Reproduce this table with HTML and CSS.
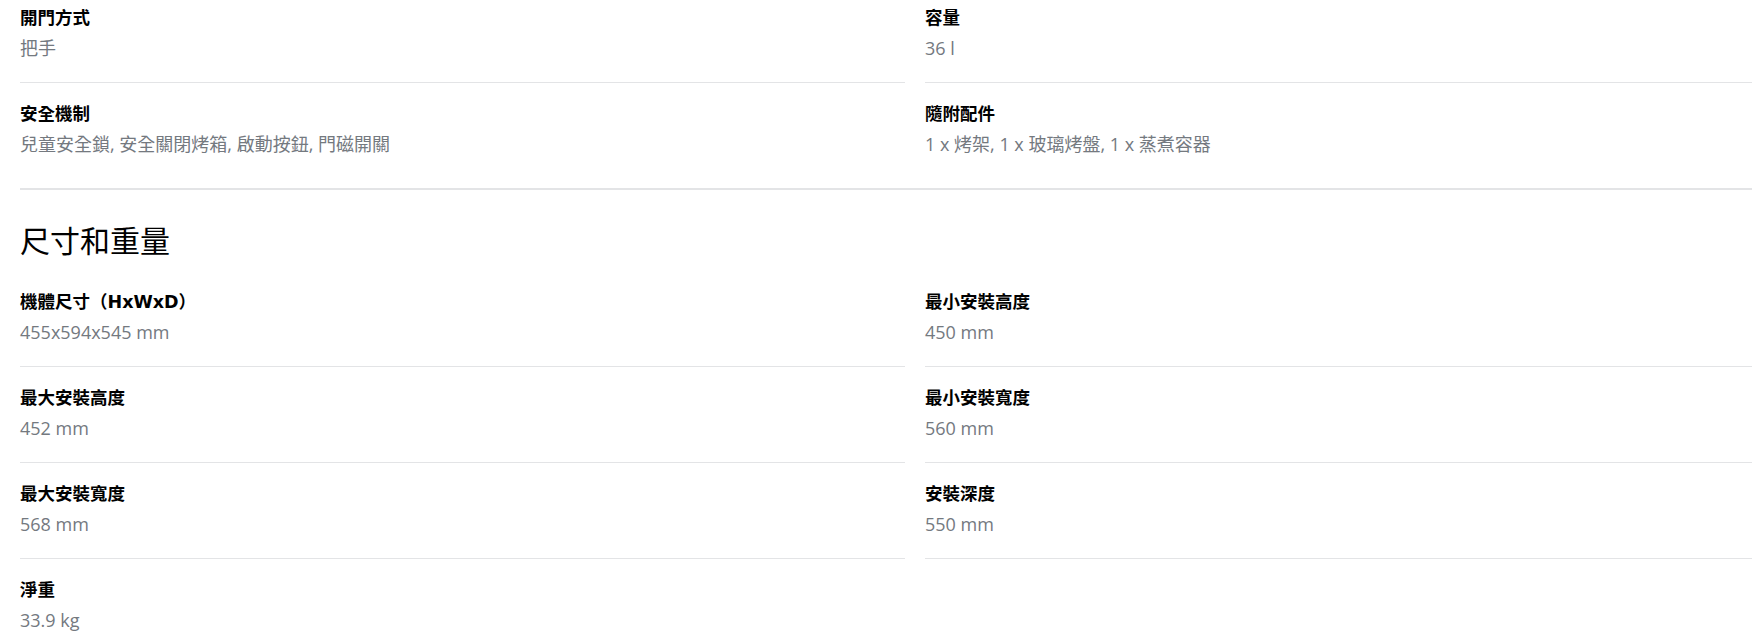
FILE: index.html
```html
<!DOCTYPE html>
<html lang="zh-Hant">
<head>
<meta charset="utf-8">
<link rel="stylesheet" href="styles.css">
</head>
<body>
<div class="page">
  <section class="section section--first">
    <div class="grid">
      <div class="item"><div class="label">開門方式</div><div class="value">把手</div></div>
      <div class="item"><div class="label">容量</div><div class="value">36 l</div></div>
      <div class="item item--last"><div class="label">安全機制</div><div class="value">兒童安全鎖, 安全關閉烤箱, 啟動按鈕, 門磁開關</div></div>
      <div class="item item--last"><div class="label">隨附配件</div><div class="value">1 x 烤架, 1 x 玻璃烤盤, 1 x 蒸煮容器</div></div>
    </div>
  </section>
  <section class="section">
    <h2 class="heading">尺寸和重量</h2>
    <div class="grid">
      <div class="item"><div class="label">機體尺寸（HxWxD）</div><div class="value">455x594x545 mm</div></div>
      <div class="item"><div class="label">最小安裝高度</div><div class="value">450 mm</div></div>
      <div class="item"><div class="label">最大安裝高度</div><div class="value">452 mm</div></div>
      <div class="item"><div class="label">最小安裝寬度</div><div class="value">560 mm</div></div>
      <div class="item"><div class="label">最大安裝寬度</div><div class="value">568 mm</div></div>
      <div class="item"><div class="label">安裝深度</div><div class="value">550 mm</div></div>
      <div class="item item--last"><div class="label">淨重</div><div class="value">33.9 kg</div></div>
    </div>
  </section>
</div>
</body>
</html>
```
FILE: styles.css
```css
html, body {
  margin: 0;
  padding: 0;
  background: #ffffff;
  overflow: hidden;
}

.page {
  margin-top: -13px;
  padding-left: 20px;
}

.section--first {
  padding-bottom: 10px;
  border-bottom: 2px solid #e3e4e6;
}

.heading {
  margin: 31px 0 14px;
  font-family: "Noto Sans CJK TC", "Liberation Sans", sans-serif;
  font-size: 30px;
  line-height: 36px;
  font-weight: 400;
  color: #000000;
}

.grid {
  display: grid;
  grid-template-columns: 885px 1fr;
  column-gap: 20px;
}

.item {
  box-sizing: border-box;
  height: 96px;
  padding: 19px 0 0;
  border-bottom: 1px solid #e3e4e6;
}

.item--last {
  height: 95px;
  border-bottom: none;
}

.label {
  font-family: "DejaVu Sans", "Noto Sans CJK TC", sans-serif;
  font-size: 17.5px;
  line-height: 24px;
  font-weight: 700;
  color: #000000;
}

.value {
  margin-top: 5px;
  font-family: "Open Sans", "Noto Sans CJK TC", sans-serif;
  font-size: 18px;
  line-height: 27px;
  color: #74797f;
}
```
